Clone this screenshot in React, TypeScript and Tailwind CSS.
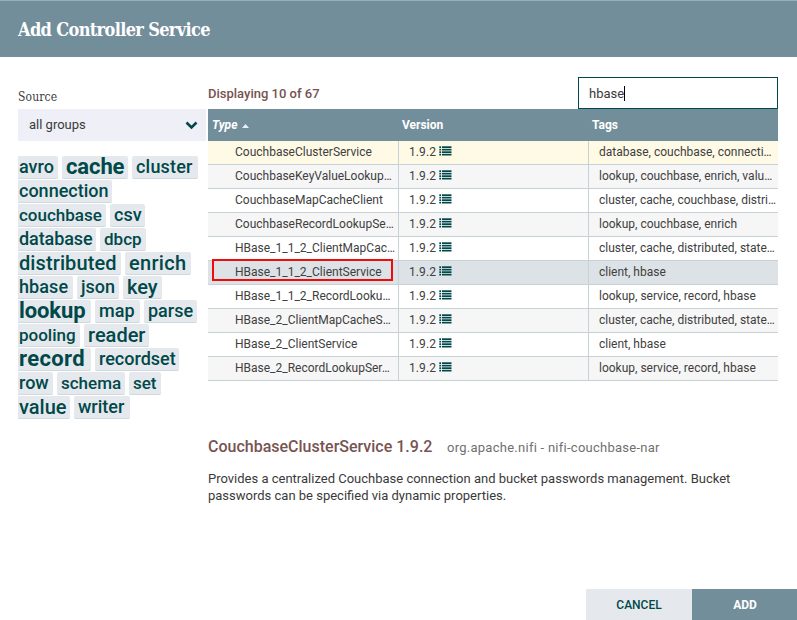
type Tag = { label: string; width: string; text: string };

const tagRows: Tag[][] = [
  [
    { label: 'avro', width: 'w-[40px]', text: 'text-[18px]' },
    { label: 'cache', width: 'w-[66px]', text: 'text-[22px] font-bold tracking-[-0.1px]' },
    { label: 'cluster', width: 'w-[66px]', text: 'text-[18px] tracking-[0.2px]' },
  ],
  [{ label: 'connection', width: 'w-[94px]', text: 'text-[18px]' }],
  [
    { label: 'couchbase', width: 'w-[88px]', text: 'text-[17px]' },
    { label: 'csv', width: 'w-[35px]', text: 'text-[18px]' },
  ],
  [
    { label: 'database', width: 'w-[78px]', text: 'text-[18px] tracking-[-0.1px]' },
    { label: 'dbcp', width: 'w-[46px]', text: 'text-[17px]' },
  ],
  [
    { label: 'distributed', width: 'w-[103px]', text: 'text-[20px] tracking-[0.1px]' },
    { label: 'enrich', width: 'w-[66px]', text: 'text-[20px] tracking-[0.3px]' },
  ],
  [
    { label: 'hbase', width: 'w-[55px]', text: 'text-[18px] tracking-[0.1px]' },
    { label: 'json', width: 'w-[42px]', text: 'text-[18px]' },
    { label: 'key', width: 'w-[39px]', text: 'text-[20px]' },
  ],
  [
    { label: 'lookup', width: 'w-[73px]', text: 'text-[22px] font-bold tracking-[-0.1px]' },
    { label: 'map', width: 'w-[45px]', text: 'text-[18px]' },
    { label: 'parse', width: 'w-[53px]', text: 'text-[18px]' },
  ],
  [
    { label: 'pooling', width: 'w-[62px]', text: 'text-[17px]' },
    { label: 'reader', width: 'w-[65px]', text: 'text-[20px]' },
  ],
  [
    { label: 'record', width: 'w-[73px]', text: 'text-[22px] font-bold tracking-[0.35px]' },
    { label: 'recordset', width: 'w-[84px]', text: 'text-[18px]' },
  ],
  [
    { label: 'row', width: 'w-[35px]', text: 'text-[18px]' },
    { label: 'schema', width: 'w-[68px]', text: 'text-[17px]' },
    { label: 'set', width: 'w-[32px]', text: 'text-[17px]' },
  ],
  [
    { label: 'value', width: 'w-[52px]', text: 'text-[20px]' },
    { label: 'writer', width: 'w-[56px]', text: 'text-[18px]' },
  ],
];

const services = [
  ['CouchbaseClusterService', 'database, couchbase, connecti…'],
  ['CouchbaseKeyValueLookup…', 'lookup, couchbase, enrich, valu…'],
  ['CouchbaseMapCacheClient', 'cluster, cache, couchbase, distri…'],
  ['CouchbaseRecordLookupSe…', 'lookup, couchbase, enrich'],
  ['HBase_1_1_2_ClientMapCac…', 'cluster, cache, distributed, state…'],
  ['HBase_1_1_2_ClientService', 'client, hbase'],
  ['HBase_1_1_2_RecordLooku…', 'lookup, service, record, hbase'],
  ['HBase_2_ClientMapCacheS…', 'cluster, cache, distributed, state…'],
  ['HBase_2_ClientService', 'client, hbase'],
  ['HBase_2_RecordLookupSer…', 'lookup, service, record, hbase'],
];

function rowColor(index: number) {
  if (index === 0) return 'bg-[#fffae6]';
  if (index === 5) return 'bg-[#dde2e6]';
  return index % 2 ? 'bg-[#f6f6f6]' : 'bg-white';
}

function ListIcon() {
  return (
    <svg width="13" height="10" viewBox="0 0 13 10" className="shrink-0">
      {[0.3, 2.8, 5.3, 7.8].map((y) => (
        <g key={y} fill="#004849">
          <rect x="0.3" y={y} width="1.7" height="1.7" />
          <rect x="2.9" y={y} width="9.6" height="1.7" />
        </g>
      ))}
    </svg>
  );
}

function TagCloud() {
  return (
    <div className="mt-[15px] flex flex-col gap-px font-medium text-[#004849]">
      {tagRows.map((row) => (
        <div key={row[0].label} className="flex gap-1">
          {row.map((tag, i) => (
            <span
              key={tag.label}
              className={`h-[23px] rounded-r-[2px] border-b border-[#ccdadb] bg-[#e5e9ed] leading-[22px] whitespace-nowrap ${i ? 'rounded-l-[2px] pl-1' : 'pl-px'} ${tag.width} ${tag.text}`}
            >
              {tag.label}
            </span>
          ))}
        </div>
      ))}
    </div>
  );
}

function ServiceTable() {
  return (
    <div>
      <div className="flex h-8 items-center bg-[#728e9b] text-[12px] font-bold text-white">
        <div className="flex w-[190px] items-center pl-1 italic">
          Type
          <svg width="7" height="4" viewBox="0 0 7 4" className="mt-[2px] ml-[5px]">
            <path d="M3.5 0 7 4H0Z" fill="#e8edf8" />
          </svg>
        </div>
        <div className="w-[190px] pl-1">Version</div>
        <div className="pl-1">Tags</div>
      </div>
      {services.map(([name, tags], i) => (
        <div
          key={name}
          className={`relative flex h-6 border-b border-[#c7d2d7] text-[12px] leading-[22px] whitespace-nowrap text-[#404040] ${rowColor(i)}`}
        >
          <div className="w-[191px] shrink-0 border-r border-[#c7d2d7] pl-[27px]">{name}</div>
          <div className="flex w-[190px] shrink-0 border-r border-[#c7d2d7] pl-[10px]">
            <span className="w-[30px] tracking-[0.1px]">1.9.2</span>
            <div className="pt-[5px] leading-none">
              <ListIcon />
            </div>
          </div>
          <div className="pl-[10px]">{tags}</div>
          {i === 5 && <div className="absolute -top-[2px] left-1 h-[22px] w-[181px] border-2 border-[#f00a0a]" />}
        </div>
      ))}
    </div>
  );
}

export default function App() {
  return (
    <div className="flex h-[620px] w-[797px] flex-col overflow-hidden bg-white font-['Roboto',sans-serif] text-[13px] text-[#3a3a3a]">
      <header className="flex h-[57px] shrink-0 items-center border-t border-[#9bb0b9] bg-[#728e9b] pt-px pl-[18px]">
        <h1 className="font-['Roboto_Slab','DejaVu_Serif_Condensed','DejaVu_Serif',serif] text-[18px] font-bold tracking-[-0.65px] whitespace-nowrap text-white">
          Add Controller Service
        </h1>
      </header>
      <main className="flex flex-1 gap-[2px] pl-[18px]">
        <aside className="w-[188px] pt-[31px]">
          <div className="h-[21px] font-['Roboto_Slab','DejaVu_Serif_Condensed','DejaVu_Serif',serif] text-[12px] leading-[18px] tracking-[0.15px]">
            Source
          </div>
          <div className="flex h-8 items-center justify-between bg-[#eeeff7] pr-2 pl-[11px]">
            <span>all groups</span>
            <svg width="13" height="9" viewBox="0 0 13 9" fill="none" stroke="#004849" strokeWidth="2.6" className="mt-px">
              <path d="m1.5 1.5 5 5 5-5" />
            </svg>
          </div>
          <TagCloud />
        </aside>
        <section className="w-[570px] pt-5">
          <div className="flex h-8 justify-between">
            <div className="pt-px leading-8 font-medium text-[#775351]">Displaying 10 of 67</div>
            <div className="flex w-[200px] items-center border border-[#004849] pt-px pl-[10px]">
              <span>hbase</span>
              <span className="h-[15px] w-px bg-black" />
            </div>
          </div>
          <ServiceTable />
          <div className="mt-[56px] flex items-baseline leading-5 whitespace-nowrap">
            <span className="w-[239px] text-[16px] font-medium text-[#775351]">CouchbaseClusterService 1.9.2</span>
            <span className="tracking-[0.26px] text-[#707070]">org.apache.nifi - nifi-couchbase-nar</span>
          </div>
          <p className="mt-[12px] leading-[17px]">
            Provides a centralized Couchbase connection and bucket passwords management. Bucket
            <br />
            passwords can be specified via dynamic properties.
          </p>
        </section>
      </main>
      <footer className="flex h-[31px] shrink-0 justify-end text-[12px] font-medium">
        <button className="w-[106px] bg-[#e5e9ed] text-[#004849]">CANCEL</button>
        <button className="w-[105px] bg-[#728e9b] pl-px font-bold text-white">ADD</button>
      </footer>
    </div>
  );
}
